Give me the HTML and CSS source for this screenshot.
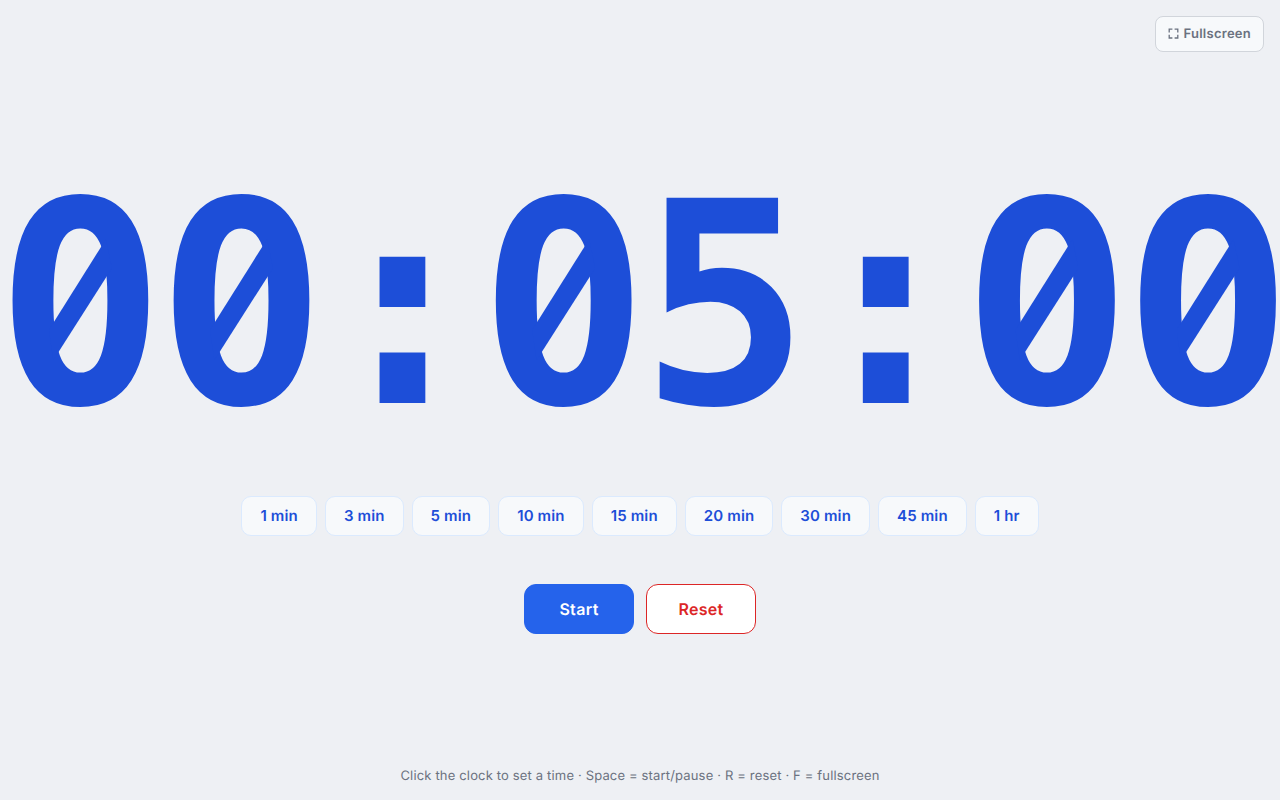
FILE: index.html
```html
<!doctype html>
<html lang="en">
<head>
<meta charset="utf-8">
<meta name="viewport" content="width=device-width, initial-scale=1">
<title>Countdown Timer</title>
<link rel="stylesheet" href="styles.css">
</head>
<body>

<button class="fullscreen" type="button">
	<svg width="12" height="12" viewBox="0 0 12 12" fill="none" stroke="currentColor" stroke-width="1.3" aria-hidden="true">
		<path d="M1.2 4.4V1.2h3.2M6.6 1.2h3.2v3.2M9.8 6.8v3.2H6.6M4.4 10H1.2V6.8"/>
	</svg>
	Fullscreen
</button>

<main class="timer">
	<button class="clock" type="button"><span class="zero">0</span><span class="zero">0</span>:<span class="zero">0</span>5:<span class="zero">0</span><span class="zero">0</span></button>

	<div class="presets">
		<button type="button">1 min</button>
		<button type="button">3 min</button>
		<button type="button">5 min</button>
		<button type="button">10 min</button>
		<button type="button">15 min</button>
		<button type="button">20 min</button>
		<button type="button">30 min</button>
		<button type="button">45 min</button>
		<button type="button">1 hr</button>
	</div>

	<div class="controls">
		<button class="start" type="button">Start</button>
		<button class="reset" type="button">Reset</button>
	</div>
</main>

<footer class="hint">Click the clock to set a time · Space = start/pause · R = reset · F = fullscreen</footer>

</body>
</html>
```
FILE: styles.css
```css
:root {
	--page: #eef0f4;
	--surface: #f7f9fb;
	--blue: #1d4ed8;
}

* {
	box-sizing: border-box;
}

body {
	margin: 0;
	min-height: 100vh;
	display: grid;
	grid-template-rows: 1fr auto 1fr;
	grid-template-columns: 100%;
	background: var(--page);
	font-family: Inter, sans-serif;
	letter-spacing: 0.01em;
	text-rendering: geometricPrecision;
	overflow-x: hidden;
}

button {
	font-family: inherit;
	letter-spacing: 0.02em;
	text-rendering: inherit;
	cursor: pointer;
}

.fullscreen {
	justify-self: end;
	align-self: start;
	display: flex;
	align-items: center;
	gap: 4px;
	height: 36px;
	margin: 16px;
	padding: 0 12px;
	border: 1px solid #d1d5db;
	border-radius: 8px;
	background: var(--surface);
	color: #6b7280;
	font-size: 13px;
	font-weight: 600;
}

.timer {
	display: flex;
	flex-direction: column;
	align-items: center;
}


/* Clock */

.clock {
	padding: 0;
	border: 0;
	background: none;
	color: var(--blue);
	font-family: "DejaVu Sans Mono", monospace;
	font-size: 22vw;
	font-weight: 700;
	letter-spacing: -0.03em;
	line-height: 1;
	white-space: nowrap;
}

/* the font dots its zeros: hide the dot, then put a slash through */
.zero {
	display: inline-block;
	position: relative;
}

.zero::before,
.zero::after {
	content: "";
	position: absolute;
}

.zero::before {
	left: 0.231em;
	top: 0.411em;
	width: 0.14em;
	height: 0.14em;
	border-radius: 50%;
	background: var(--page);
}

.zero::after {
	left: 0.189em;
	top: 0.259em;
	width: 0.224em;
	height: 0.43em;
	background: currentColor;
	clip-path: polygon(0 75%, 90.5% 0, 100% 24%, 7% 100%);
}


/* Buttons */

.presets {
	display: flex;
	flex-wrap: wrap;
	justify-content: center;
	gap: 8px;
	margin-top: 48px;
}

.presets button {
	height: 40px;
	padding: 0 18px;
	border: 1px solid #dbeafe;
	border-radius: 10px;
	background: var(--surface);
	color: var(--blue);
	font-size: 15px;
	font-weight: 600;
	letter-spacing: 0.01em;
}

.controls {
	display: flex;
	gap: 12px;
	margin-top: 48px;
}

.controls button {
	min-width: 110px;
	height: 50px;
	border: 1px solid #2563eb;
	border-radius: 12px;
	font-size: 16px;
	font-weight: 600;
}

.controls .start {
	background: #2563eb;
	color: #fff;
}

.controls .reset {
	border-color: #dc2626;
	background: #fff;
	color: #dc2626;
}

.hint {
	align-self: end;
	padding: 16px;
	color: #6b7280;
	font-size: 13px;
	line-height: 16px;
	text-align: center;
}
```
